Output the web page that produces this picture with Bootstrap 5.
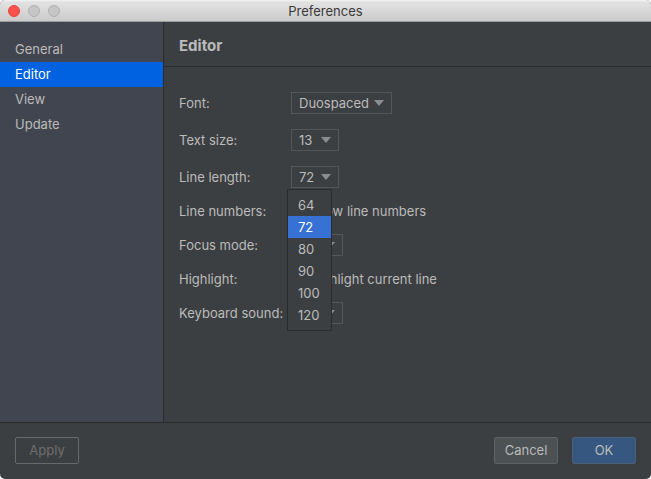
<!DOCTYPE html>
<html lang="en" data-bs-theme="dark">
<head>
<meta charset="utf-8">
<meta name="viewport" content="width=device-width, initial-scale=1">
<title>Preferences</title>
<link href="https://cdn.jsdelivr.net/npm/bootstrap@5.3.0/dist/css/bootstrap.min.css" rel="stylesheet">
<style>
  html { background: #fff; }
  body { background: #fff; color: #bbb; font: 13px/22px Inter, "Liberation Sans", sans-serif; }
  .pref-window { background: #3c3f41; border-radius: 5px; }
  .title-bar { height: 22px; background: linear-gradient(#f4f4f4 0, #e2e2e2 2px, #cbcbcb 100%); border-bottom: 1px solid #9a9c9d; }
  .title-bar h1 { font-size: 13px; font-weight: 400; line-height: 22px; color: #3a3a3a; }
  .traffic { left: 8px; top: 5px; gap: 8px; }
  .traffic button { width: 12px; height: 12px; border: 1px solid #b0b0b0; background: #c6c6c6; }
  .traffic .close-dot { background: #ff5148; border-color: #e2463f; }
  .side-list { width: 164px; background: #41454f; border-right: 1px solid #2b2b2b; padding-top: 15px; }
  .side-list .nav-link { color: #bbb; padding: 0 15px; line-height: 25px; border-radius: 0; }
  .side-list .nav-link.active { background: #0062e1; color: #fff; }
  .page-head { border-bottom: 1px solid #2b2b2b; padding: 4px 15px 0; }
  .page-head h2 { font-size: 15px; font-weight: 700; line-height: 40px; color: #bbb; }
  .settings { padding: 25px 15px; }
  .setting { min-height: 22px; margin-bottom: 12px; }
  .setting.roomy { margin-bottom: 15px; }
  .setting-name { width: 112px; }
  .settings .form-select {
    height: 22px; padding: 0 7px; font-size: 13px; line-height: 20px; color: #bbb;
    border: 1px solid #53575a; border-radius: 0; background-color: #3c3f41; box-shadow: none;
    background-image: url("data:image/svg+xml,%3Csvg xmlns='http://www.w3.org/2000/svg' viewBox='0 0 10 6'%3E%3Cpath d='M0 0H10L5 6Z' fill='%238b8d8f'/%3E%3C/svg%3E");
    background-size: 10px 6px; background-position: right 7px center;
  }
  .w-font { width: 101px; }
  .w-number { width: 48px; }
  .w-mode { width: 52px; }
  .settings .form-check-input { width: 14px; height: 14px; margin: 0 4px 0 0; background-color: #43494a; border-color: #6b6b6b; border-radius: 3px; }
  .options { left: -4px; top: 23px; width: 45px; padding: 4px 0; background: #3c3f41; border: 1px solid #2a2c2d; z-index: 10; }
  .options button { padding: 0 10px; font-size: 13px; line-height: 22px; color: #bbb; }
  .options button.active { background: #3671d3; color: #fff; }
  .foot { border-top: 1px solid #2b2b2b; padding: 14px 15px 15px; gap: 14px; }
  .foot .btn { width: 64px; height: 27px; padding: 0; font-size: 13px; line-height: 25px; border-radius: 2px; color: #bbb; border: 1px solid #5e6263; background: #4c5154; }
  .foot .btn-apply { background: transparent; border-color: #68696a; color: #6e6e6e; opacity: 1; }
  .foot .btn-ok { background: #365880; border-color: #4c5f78; }
</style>
</head>
<body>
<div class="pref-window d-flex flex-column min-vh-100 overflow-hidden">
  <header class="title-bar position-relative text-center flex-shrink-0">
    <div class="traffic position-absolute d-flex">
      <button type="button" class="close-dot rounded-circle p-0" aria-label="Close"></button>
      <button type="button" class="rounded-circle p-0" aria-label="Minimize" disabled></button>
      <button type="button" class="rounded-circle p-0" aria-label="Zoom" disabled></button>
    </div>
    <h1 class="m-0">Preferences</h1>
  </header>

  <div class="d-flex flex-grow-1">
    <nav class="side-list nav nav-pills flex-column flex-nowrap flex-shrink-0" aria-label="Sections">
      <a class="nav-link" href="#general">General</a>
      <a class="nav-link active" href="#editor" aria-current="page">Editor</a>
      <a class="nav-link" href="#view">View</a>
      <a class="nav-link" href="#update">Update</a>
    </nav>

    <main class="flex-grow-1" id="editor">
      <div class="page-head"><h2 class="m-0">Editor</h2></div>
      <form class="settings">
        <div class="setting roomy d-flex align-items-center">
          <label class="setting-name" for="font">Font:</label>
          <select class="form-select w-font" id="font"><option>Duospaced</option></select>
        </div>
        <div class="setting roomy d-flex align-items-center">
          <label class="setting-name" for="size">Text size:</label>
          <select class="form-select w-number" id="size"><option>13</option></select>
        </div>
        <div class="setting d-flex align-items-center">
          <label class="setting-name" for="length">Line length:</label>
          <div class="position-relative d-flex">
            <select class="form-select w-number" id="length">
              <option>64</option><option selected>72</option><option>80</option><option>90</option><option>100</option><option>120</option>
            </select>
            <div class="options position-absolute" role="listbox" aria-label="Line length">
              <button type="button" role="option" class="d-block w-100 border-0 bg-transparent text-start">64</button>
              <button type="button" role="option" aria-selected="true" class="active d-block w-100 border-0 text-start">72</button>
              <button type="button" role="option" class="d-block w-100 border-0 bg-transparent text-start">80</button>
              <button type="button" role="option" class="d-block w-100 border-0 bg-transparent text-start">90</button>
              <button type="button" role="option" class="d-block w-100 border-0 bg-transparent text-start">100</button>
              <button type="button" role="option" class="d-block w-100 border-0 bg-transparent text-start">120</button>
            </div>
          </div>
        </div>
        <div class="setting d-flex align-items-center">
          <span class="setting-name">Line numbers:</span>
          <input class="form-check-input" type="checkbox" id="numbers"><label for="numbers">Show line numbers</label>
        </div>
        <div class="setting d-flex align-items-center">
          <label class="setting-name" for="focus">Focus mode:</label>
          <select class="form-select w-mode" id="focus"><option>Off</option></select>
        </div>
        <div class="setting d-flex align-items-center">
          <span class="setting-name">Highlight:</span>
          <input class="form-check-input" type="checkbox" id="highlight"><label for="highlight">Highlight current line</label>
        </div>
        <div class="setting d-flex align-items-center">
          <label class="setting-name" for="sound">Keyboard sound:</label>
          <select class="form-select w-mode" id="sound"><option>Off</option></select>
        </div>
      </form>
    </main>
  </div>

  <footer class="foot d-flex align-items-center flex-shrink-0">
    <button type="button" class="btn btn-apply me-auto" disabled>Apply</button>
    <button type="button" class="btn">Cancel</button>
    <button type="submit" class="btn btn-ok">OK</button>
  </footer>
</div>
<script src="https://cdn.jsdelivr.net/npm/bootstrap@5.3.0/dist/js/bootstrap.bundle.min.js"></script>
</body>
</html>
